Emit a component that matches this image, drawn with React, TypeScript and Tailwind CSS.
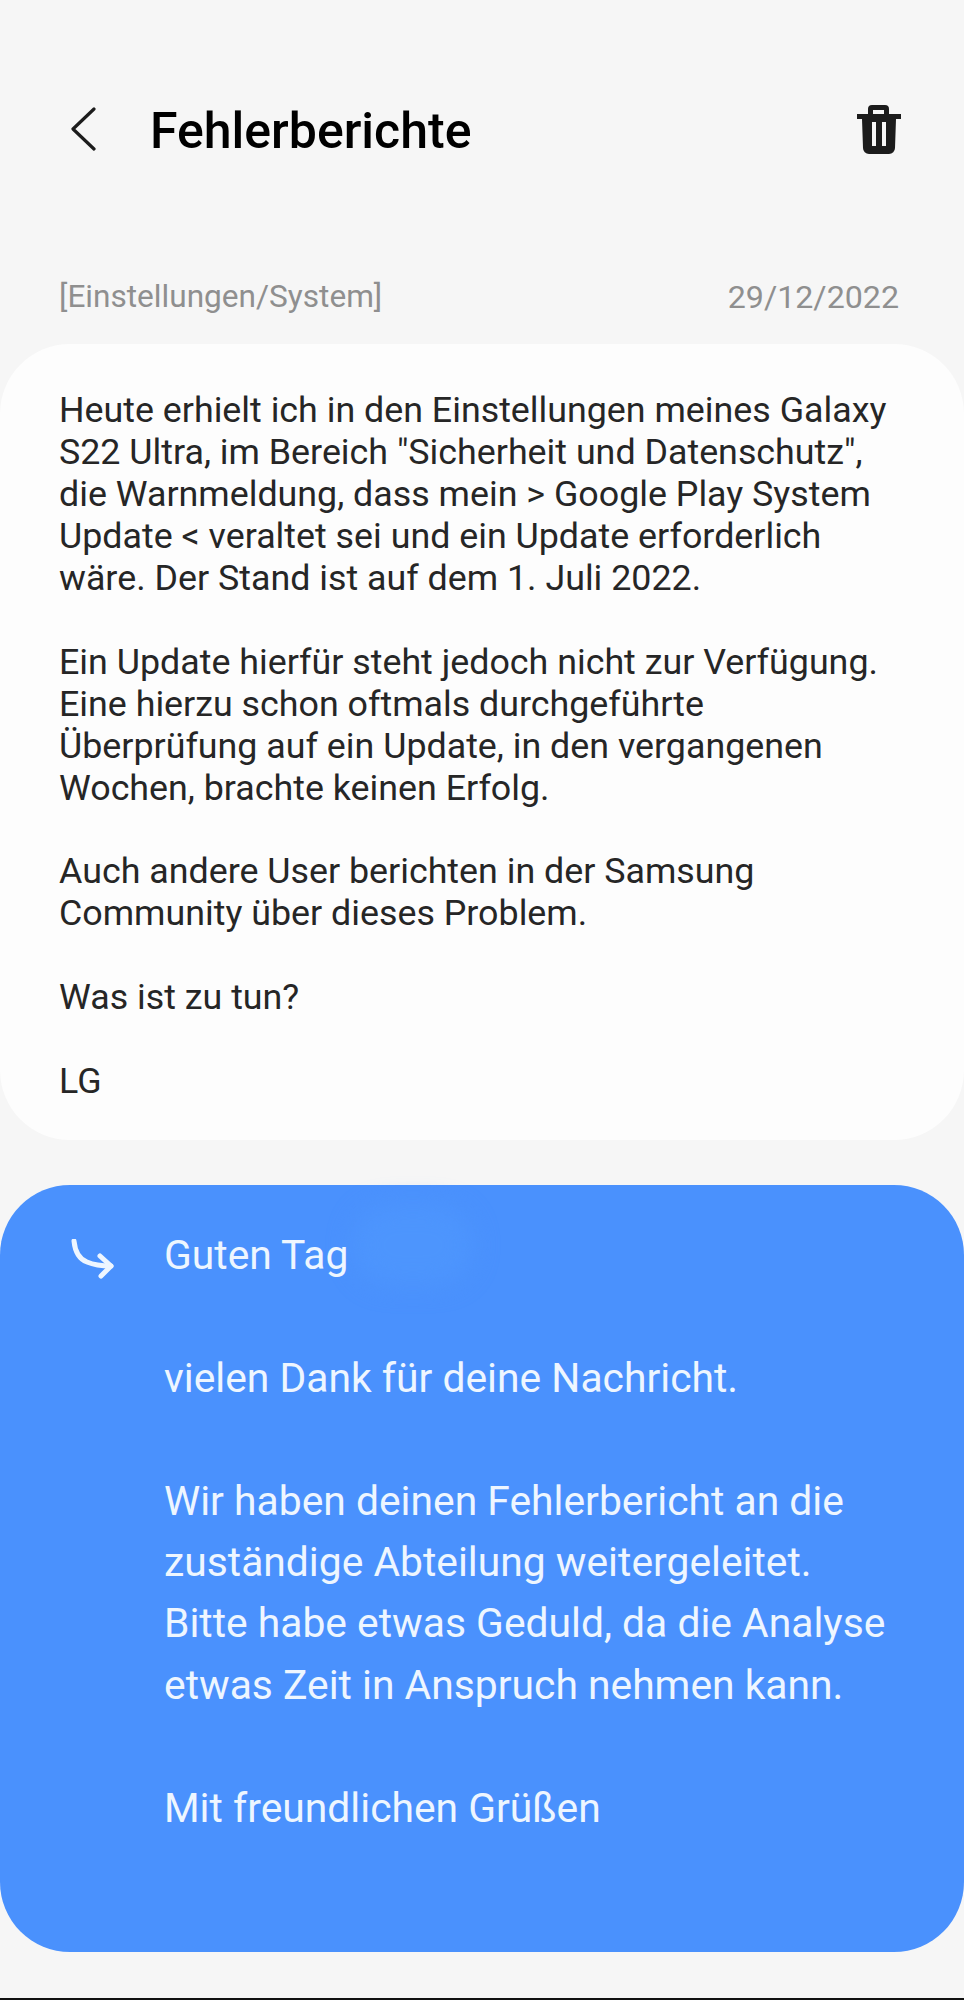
function BackIcon() {
  return (
    <svg width="26" height="44" viewBox="0 0 26 44" fill="none" stroke="#1c1c1c" strokeWidth="3.2" strokeLinecap="round" strokeLinejoin="round">
      <path d="M24 2L3 22l21 20" />
    </svg>
  );
}

function TrashIcon() {
  return (
    <svg width="44" height="49" viewBox="0 0 44 49">
      <path
        fill="#1c1c1c"
        fillRule="evenodd"
        d="M11 9V4a4 4 0 0 1 4-4h13a4 4 0 0 1 4 4v5h12v5h-5l-1 29a6 6 0 0 1-6 6H12a6 6 0 0 1-6-6L5 14H0V9h11zm5-4v4h11V5H16zM15 17v24h4V17h-4zm10 0v24h4V17h-4z"
      />
    </svg>
  );
}

function ReplyArrow() {
  return (
    <svg width="44" height="40" viewBox="0 0 44 40" fill="none" stroke="#eef6ff" strokeWidth="5" strokeLinecap="round" strokeLinejoin="round">
      <path d="M4 2c1 10 5 18 13 21 7 3 15 4 24 4" />
      <path d="M30 17l11 10-10 10" />
    </svg>
  );
}

export default function App() {
  return (
    <div className="relative h-[2000px] w-[964px] overflow-hidden bg-[#f6f6f6] font-['Roboto',sans-serif]">
      {/* Header */}
      <div className="box-content flex h-[90px] items-center justify-between pl-[70px] pr-[63px] pt-[84px]">
        <div className="flex items-center">
          <BackIcon />
          <h1 className="ml-[54px] mt-[3px] text-[50px] font-medium leading-none text-black">Fehlerberichte</h1>
        </div>
        <TrashIcon />
      </div>

      {/* Category + date */}
      <div className="mt-[103px] flex items-center justify-between pl-[59px] pr-[65px] text-[31.6px] leading-[40px] text-[#8f8f8f]">
        <span>[Einstellungen/System]</span>
        <span className="text-[32.2px]">29/12/2022</span>
      </div>

      {/* Report */}
      <div className="mt-[27px] h-[796px] rounded-[70px] bg-[#fdfdfd] pl-[59px] pt-[46px] text-[35.8px] leading-[41.95px] text-[#262626]">
        <p>
          Heute erhielt ich in den Einstellungen meines Galaxy
          <br />
          S22 Ultra, im Bereich "Sicherheit und Datenschutz",
          <br />
          die Warnmeldung, dass mein &gt; Google Play System
          <br />
          Update &lt; veraltet sei und ein Update erforderlich
          <br />
          wäre. Der Stand ist auf dem 1. Juli 2022.
        </p>
        <p className="mt-[41.95px]">
          Ein Update hierfür steht jedoch nicht zur Verfügung.
          <br />
          Eine hierzu schon oftmals durchgeführte
          <br />
          Überprüfung auf ein Update, in den vergangenen
          <br />
          Wochen, brachte keinen Erfolg.
        </p>
        <p className="mt-[41.95px]">
          Auch andere User berichten in der Samsung
          <br />
          Community über dieses Problem.
        </p>
        <p className="mt-[41.95px]">Was ist zu tun?</p>
        <p className="mt-[41.95px]">LG</p>
      </div>

      {/* Answer */}
      <div className="relative mt-[45px] flex h-[767px] rounded-[70px] bg-[#4a91fd] pl-[70px] pt-[40px] text-[40.8px] leading-[61.4px] text-[#eef6ff]">
        {/* smudged-out name next to the greeting */}
        <div className="absolute left-[353px] top-[20px] h-[80px] w-[120px] rounded-full bg-[#4d95fd] blur-md" />
        <div className="w-[94px] pt-[14px]">
          <ReplyArrow />
        </div>
        <div className="relative">
          <p>Guten Tag</p>
          <p className="mt-[61.4px]">vielen Dank für deine Nachricht.</p>
          <p className="mt-[61.4px]">
            Wir haben deinen Fehlerbericht an die
            <br />
            zuständige Abteilung weitergeleitet.
            <br />
            Bitte habe etwas Geduld, da die Analyse
            <br />
            etwas Zeit in Anspruch nehmen kann.
          </p>
          <p className="mt-[61.4px]">Mit freundlichen Grüßen</p>
        </div>
      </div>

      {/* Bottom edge of the capture */}
      <div className="absolute inset-x-0 bottom-0 h-[2px] bg-[#111]" />
    </div>
  );
}
